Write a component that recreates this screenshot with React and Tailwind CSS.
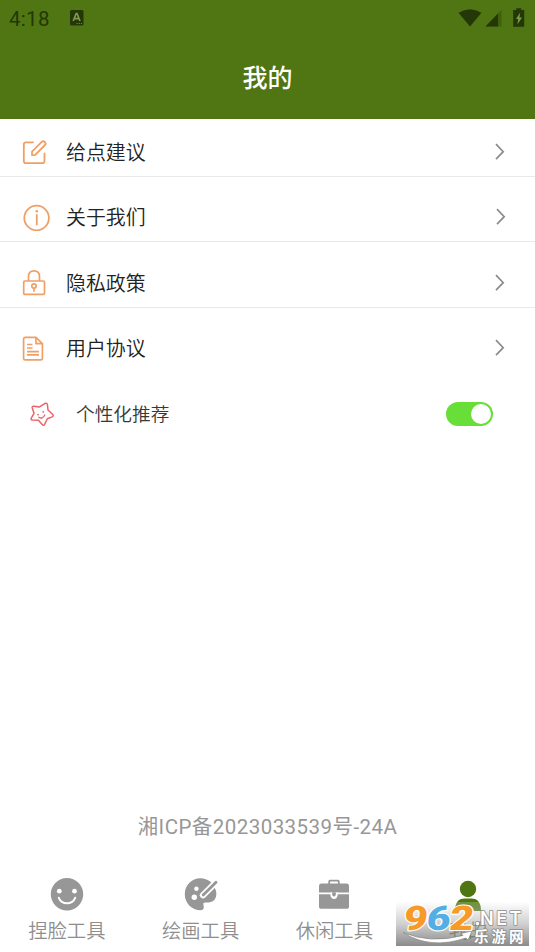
import React, { useState } from 'react';

const EditIcon = () => (
  <svg width="26" height="26" viewBox="0 0 26 26" fill="none" stroke="#f0a067" strokeWidth="1.8" strokeLinecap="round" strokeLinejoin="round">
    <path d="M11 3.3H4Q1.8 3.3 1.8 5.5V22Q1.8 24.2 4 24.2H20.2Q22.5 24.2 22.5 22V14.5" />
    <path d="M10 16.2V12.6L19.8 2.8Q21.4 1.6 22.9 3Q24.2 4.4 23 6L13.2 15.8Z" />
  </svg>
);

const InfoIcon = () => (
  <svg width="28" height="28" viewBox="0 0 28 28" fill="none" stroke="#f0a067" strokeWidth="1.8" strokeLinecap="round">
    <circle cx="14.6" cy="15" r="12.3" />
    <path d="M14.8 12V21.5" />
    <circle cx="14.8" cy="8.2" r="1.3" fill="#f0a067" stroke="none" />
  </svg>
);

const LockIcon = () => (
  <svg width="26" height="28" viewBox="0 0 26 28" fill="none" stroke="#f0a067" strokeWidth="1.7" strokeLinejoin="round">
    <path d="M6.5 12V7.5Q6.5 1.8 12 1.8Q17.5 1.8 17.5 7.5V12" />
    <rect x="1.7" y="12" width="20.8" height="13.4" rx="1.2" />
    <circle cx="12" cy="17" r="2.2" />
    <path d="M12 19V22.8" />
  </svg>
);

const DocIcon = () => (
  <svg width="24" height="26" viewBox="0 0 24 26" fill="none" stroke="#f0a067" strokeWidth="1.7" strokeLinejoin="round">
    <path d="M14 2.3H3.2Q1.6 2.3 1.6 3.9V23.5Q1.6 24.9 3.2 24.9H18.8Q20.4 24.9 20.4 23.5V8.7Z" />
    <path d="M14 2.3V8.7H20.4" />
    <path d="M5 9.5H10.5M5 13H10.5M5 16.7H17M5 19.9H17" />
  </svg>
);

const StarIcon = () => (
  <svg width="26" height="26" viewBox="0 0 26 26" fill="none" stroke="#ed6266" strokeWidth="1.5" strokeLinecap="round" strokeLinejoin="round">
    <path d="M10.5 5.9L16.2 2.3Q18 1.7 18.4 3.5L19 9L23.8 13.5Q25 15.1 23.2 15.9L18.3 17.7L15.7 23.3Q14.6 25 13.2 23.5L9.4 19.3L3.4 19.1Q1.4 18.7 2.4 16.9L5 12.3L3.2 6.7Q3 5.1 4.8 5.2Z" />
    <path d="M9.8 16.2Q13.4 18.5 15.8 14" strokeWidth="1.3" />
    <circle cx="9" cy="13.6" r="0.9" fill="#ed6266" stroke="none" />
    <circle cx="14.2" cy="10.8" r="0.9" fill="#ed6266" stroke="none" />
  </svg>
);

const Chevron = () => (
  <svg width="10" height="18" viewBox="0 0 10 18" fill="none" stroke="#8c8c8c" strokeWidth="1.7">
    <path d="M1 1.2L8.2 8.7L1 16.2" />
  </svg>
);

const FaceIcon = () => (
  <svg width="34" height="34" viewBox="0 0 34 34">
    <circle cx="17" cy="17.3" r="16.2" fill="#979797" />
    <circle cx="9.3" cy="14.2" r="2.4" fill="#fff" />
    <circle cx="24.5" cy="14.2" r="2.4" fill="#fff" />
    <path d="M8.8 20.8Q11 26.2 17 26.2Q23 26.2 25.2 20.8" fill="none" stroke="#fff" strokeWidth="2" strokeLinecap="round" />
  </svg>
);

const PaletteIcon = () => (
  <svg width="34" height="34" viewBox="0 0 34 34">
    <path d="M26.5 4.8Q22 1.3 16.5 1.3C7.5 1.3 .8 8.3 .8 17.3C.8 26.3 8 33.3 16.5 33.3Q19.8 33.3 19.8 30.1C19.8 27.3 18 25.8 21.5 25.6H25Q32.4 24.3 32.4 16.8Q32.4 14.3 31.2 11.8Z" fill="#979797" />
    <circle cx="12.4" cy="11.7" r="2.2" fill="#fff" />
    <circle cx="10.3" cy="20.2" r="2.7" fill="#fff" />
    <path d="M19 18.3L33 4.3" stroke="#fff" strokeWidth="6.2" strokeLinecap="round" />
    <path d="M19.2 18.1L32 5.3" stroke="#979797" strokeWidth="2.8" strokeLinecap="round" />
  </svg>
);

const CaseIcon = () => (
  <svg width="34" height="34" viewBox="0 0 34 34" fill="#979797">
    <path d="M12.2 7V4.4Q12.2 3.6 13 3.6H21Q21.8 3.6 21.8 4.4V7" fill="none" stroke="#979797" strokeWidth="1.8" />
    <path d="M4.5 6.6H29.5Q32 6.6 32 9V15.6H2V9Q2 6.6 4.5 6.6Z" />
    <path d="M2 17.2H32V29.2Q32 31.8 29.5 31.8H4.5Q2 31.8 2 29.2Z" />
    <path d="M13.3 15.6H20.7V18Q20 22 17 22Q14 22 13.3 18Z" fill="#fff" />
    <path d="M15.2 15.2H18.8V17.6Q18.5 19.6 17 19.6Q15.5 19.6 15.2 17.6Z" />
  </svg>
);

const PersonIcon = () => (
  <svg width="34" height="34" viewBox="0 0 34 34" fill="#4f7612">
    <circle cx="17" cy="12" r="8.2" />
    <path d="M4 34Q4 21.5 13.5 21.5H20.5Q30 21.5 30 34Z" />
  </svg>
);

const menu = [
  { label: '给点建议', icon: <EditIcon />, row: 'h-[58px] pt-2 border-b', arrow: 'pr-[30px]' },
  { label: '关于我们', icon: <InfoIcon />, row: 'h-[65px] pt-4 border-b', arrow: 'pr-[29px]' },
  { label: '隐私政策', icon: <LockIcon />, row: 'h-[66px] pt-4 border-b', arrow: 'pr-[30px]' },
  { label: '用户协议', icon: <DocIcon />, row: 'h-[65px] pt-[15px]', arrow: 'pr-[30px]' },
];

const tabs = [
  { label: '捏脸工具', icon: <FaceIcon /> },
  { label: '绘画工具', icon: <PaletteIcon /> },
  { label: '休闲工具', icon: <CaseIcon /> },
  { label: '我的', icon: <PersonIcon /> },
];

const StatusBar = () => (
  <div className="h-9 flex items-center justify-between pl-[9px] pr-[9px]">
    <div className="flex items-center gap-[19px] text-[#243707]">
      <span className="w-[41px] text-[20.5px] leading-9 tracking-[0.3px] pt-0.5">4:18</span>
      <svg width="15" height="16" viewBox="0 0 15 16">
        <rect x="1" y="0" width="13.5" height="15.5" rx="1.5" fill="#243707" />
        <path d="M4.2 11L7.2 3.5H8L11 11M5.4 8.7H10" fill="none" stroke="#7d9a4c" strokeWidth="1.7" />
        <path d="M7.5 13.5H13" stroke="#6a883c" strokeDasharray="1.2 1" />
      </svg>
    </div>
    <svg width="68" height="22" viewBox="0 0 68 22" fill="#243707">
      <path d="M0.5 5.8Q12 -1.5 23.5 5.8L12 19.5Z" />
      <path d="M43.5 3V19.5H27.5Z" fill="#40600f" />
      <path d="M40 6.6V19.5H27.5Z" />
      <path d="M58.3 1.2H63.2V3H66.2V19.8H55.2V3H58.3Z" />
      <path d="M62.2 5.5L58 12H60.3L59.4 17.6L64 10.5H61.4Z" fill="#7d9a4c" />
    </svg>
  </div>
);

// Site badge in the bottom right corner
const SiteBadge = () => (
  <div className="absolute left-[396px] top-[902px] w-[133px] h-[44px] bg-gradient-to-b from-white/20 via-[#b0b0b0]/60 to-[#6e6e6e]/80">
    <svg width="133" height="44" viewBox="0 0 133 44" className="overflow-visible">
      <path d="M7 30.5Q34 42 67 33.5L65 31.5L76 29L72 38L70 36Q34 48 7 30.5Z" fill="#fff" stroke="#888" strokeWidth="0.7" />
      <g transform="translate(3.5 0) skewX(-7)" fontFamily="Roboto, sans-serif" fontWeight="900" fontSize="34" stroke="#fff" strokeWidth="2.2" paintOrder="stroke" strokeLinejoin="round">
        <text x="6.5" y="28" textLength="24" lengthAdjust="spacingAndGlyphs" fill="#f79a28">9</text>
        <text x="29.5" y="28" textLength="24" lengthAdjust="spacingAndGlyphs" fill="#53aee5">6</text>
        <text x="52.5" y="28" textLength="24" lengthAdjust="spacingAndGlyphs" fill="#f79a28">2</text>
      </g>
      <g fill="#fff" stroke="#8c8c8c" strokeWidth="1.6" paintOrder="stroke" strokeLinejoin="round" fontWeight="700">
        <circle cx="81.5" cy="21.5" r="1.7" />
        <text x="84" y="22.5" fontFamily="Inter, Roboto, sans-serif" fontSize="18" fontWeight="600" letterSpacing="2.5">NET</text>
        <text x="78" y="40" fontFamily="'Noto Sans CJK SC', sans-serif" fontSize="14.5" letterSpacing="3">乐游网</text>
      </g>
    </svg>
  </div>
);

const App = () => {
  const [recommend, setRecommend] = useState(true);
  const [active, setActive] = useState('我的');

  return (
    <div className="relative w-[535px] h-[952px] overflow-hidden bg-white flex flex-col font-['Roboto','Noto_Sans_CJK_SC',sans-serif]">
      {/* Header */}
      <header className="h-[119px] shrink-0 bg-[#4f7612]">
        <StatusBar />
        <h1 className="h-[82px] pt-[3px] flex items-center justify-center text-[25px] font-medium text-white">我的</h1>
      </header>

      {/* Menu */}
      <main className="flex-1">
        {menu.map((item) => (
          <div key={item.label} className={`flex items-center border-[#e8e8e8] ${item.row} ${item.arrow}`}>
            <div className="w-[66px] pl-[22px] shrink-0">{item.icon}</div>
            <span className="flex-1 pt-1 text-[19.9px] leading-7 font-[350] text-[#222]">{item.label}</span>
            <Chevron />
          </div>
        ))}
        <div className="h-[65px] pt-4 pl-[29px] pr-[42px] flex items-center">
          <div className="w-[47px]"><StarIcon /></div>
          <span className="flex-1 pt-[3px] text-[18.7px] leading-7 font-[350] text-[#383838]">个性化推荐</span>
          <button
            onClick={() => setRecommend(!recommend)}
            className={`w-[47px] h-6 rounded-full p-[2px] flex items-center ${recommend ? 'bg-[#68de38] justify-end' : 'bg-gray-300 justify-start'}`}
          >
            <span className="w-5 h-5 rounded-full bg-white" />
          </button>
        </div>
      </main>

      <p className="text-center text-[20.5px] leading-7 tracking-[0.45px] text-[#979797] mb-[36px]">湘ICP备2023033539号-24A</p>

      {/* Tab bar */}
      <nav className="h-[75px] shrink-0 grid grid-cols-4">
        {tabs.map((tab) => (
          <button key={tab.label} onClick={() => setActive(tab.label)} className="flex flex-col items-center">
            {tab.icon}
            <span className={`mt-[7px] text-[19.3px] leading-7 font-[350] ${active === tab.label ? 'text-[#4f7612]' : 'text-[#8e8e8e]'}`}>
              {tab.label}
            </span>
          </button>
        ))}
      </nav>

      <SiteBadge />
    </div>
  );
};

export default App;
